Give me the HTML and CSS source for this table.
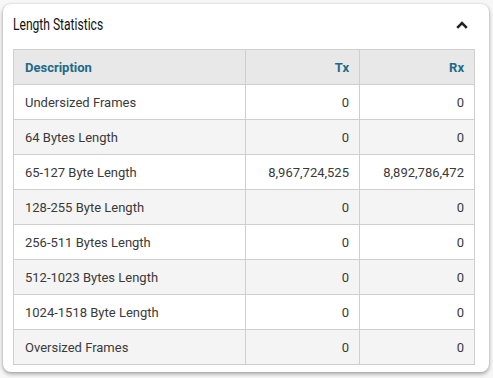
FILE: index.html
```html
<!DOCTYPE html>
<html>
<head>
<meta charset="utf-8">
<link rel="stylesheet" href="styles.css">
</head>
<body>
<div class="card">
  <div class="card-head">
    <span class="title">Length Statistics</span>
    <svg class="chev" width="12" height="8" viewBox="0 0 12 8"><path d="M1.2 6.8 L6 2 L10.8 6.8" fill="none" stroke="#222" stroke-width="2.6"/></svg>
  </div>
  <table class="stats">
    <colgroup><col class="c1"><col class="c2"><col class="c3"></colgroup>
    <thead>
      <tr><th class="l">Description</th><th>Tx</th><th>Rx</th></tr>
    </thead>
    <tbody>
      <tr><td class="l">Undersized Frames</td><td>0</td><td>0</td></tr>
      <tr><td class="l">64 Bytes Length</td><td>0</td><td>0</td></tr>
      <tr><td class="l">65-127 Byte Length</td><td>8,967,724,525</td><td>8,892,786,472</td></tr>
      <tr><td class="l">128-255 Byte Length</td><td>0</td><td>0</td></tr>
      <tr><td class="l">256-511 Bytes Length</td><td>0</td><td>0</td></tr>
      <tr><td class="l">512-1023 Bytes Length</td><td>0</td><td>0</td></tr>
      <tr><td class="l">1024-1518 Byte Length</td><td>0</td><td>0</td></tr>
      <tr><td class="l">Oversized Frames</td><td>0</td><td>0</td></tr>
    </tbody>
  </table>
</div>
</body>
</html>
```

FILE: styles.css
```css
html, body { margin: 0; padding: 0; }
body {
  background: #f7f7f7;
  font-family: Roboto, "Liberation Sans", sans-serif;
  width: 493px;
  height: 378px;
  overflow: hidden;
}
.card {
  margin: 4px 0 0 3px;
  width: 486px;
  height: 368px;
  box-sizing: border-box;
  background: #fff;
  border-radius: 8px;
  box-shadow: 0 2px 4px rgba(0,0,0,0.35), 0 0 2px rgba(0,0,0,0.12);
  padding: 0 15px 8px 10px;
}
.card-head {
  height: 40px;
  display: flex;
  align-items: center;
  justify-content: space-between;
  margin-bottom: 5px;
}
.title {
  display: inline-block;
  font-family: Roboto, "Liberation Sans", sans-serif;
  font-size: 17px;
  color: #111;
  transform: scaleX(0.71);
  transform-origin: left center;
}
.chev { margin-right: 6px; margin-top: 1px; }
.stats {
  width: 461px;
  border-collapse: collapse;
  table-layout: fixed;
  font-size: 13px;
}
.c1 { width: 232px; }
.c2 { width: 114px; }
.c3 { width: 115px; }
.stats th, .stats td {
  height: 34px;
  padding: 0 10px 0 11px;
  border: 1px solid #cfcfcf;
  text-align: right;
  white-space: nowrap;
}
.stats th {
  background: #e8e8e8;
  color: #1d6a89;
  font-weight: bold;
}
.stats td { color: #3a3a3a; }
.stats .l { text-align: left; }
.stats tbody tr:nth-child(even) td { background: #f4f4f4; }
```
